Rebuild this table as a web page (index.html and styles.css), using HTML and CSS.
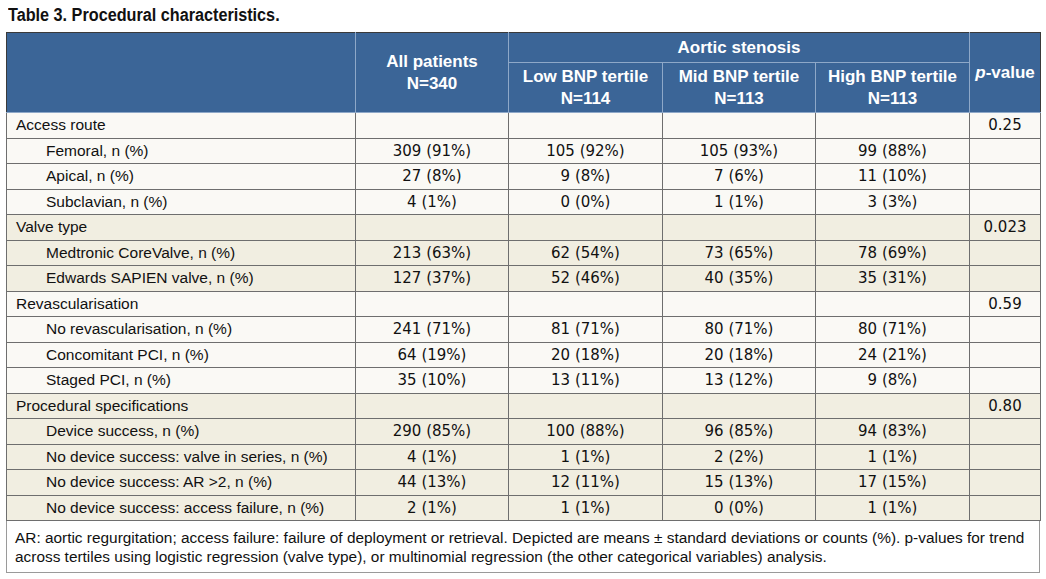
FILE: index.html
```html
<!DOCTYPE html>
<html>
<head>
<meta charset="utf-8">
<link rel="stylesheet" href="styles.css">
</head>
<body>
<div class="page">
  <div class="title-wrap"><h1 class="title">Table 3. Procedural characteristics.</h1></div>
  <table class="tbl">
    <colgroup>
      <col class="c-label"><col class="c-num"><col class="c-num2"><col class="c-num"><col class="c-num2"><col class="c-p">
    </colgroup>
    <thead>
      <tr class="h1">
        <th rowspan="2"></th>
        <th rowspan="2">All patients<br>N=340</th>
        <th colspan="3" class="grp">Aortic stenosis</th>
        <th rowspan="2"><i>p</i>-value</th>
      </tr>
      <tr class="h2">
        <th>Low BNP tertile<br>N=114</th>
        <th>Mid BNP tertile<br>N=113</th>
        <th>High BNP tertile<br>N=113</th>
      </tr>
    </thead>
    <tbody class="light">
      <tr><td class="grp-label">Access route</td><td></td><td></td><td></td><td></td><td>0.25</td></tr>
      <tr><td class="sub">Femoral, n (%)</td><td>309 (91%)</td><td>105 (92%)</td><td>105 (93%)</td><td>99 (88%)</td><td></td></tr>
      <tr><td class="sub">Apical, n (%)</td><td>27 (8%)</td><td>9 (8%)</td><td>7 (6%)</td><td>11 (10%)</td><td></td></tr>
      <tr><td class="sub">Subclavian, n (%)</td><td>4 (1%)</td><td>0 (0%)</td><td>1 (1%)</td><td>3 (3%)</td><td></td></tr>
    </tbody>
    <tbody class="dark">
      <tr><td class="grp-label">Valve type</td><td></td><td></td><td></td><td></td><td>0.023</td></tr>
      <tr><td class="sub">Medtronic CoreValve, n (%)</td><td>213 (63%)</td><td>62 (54%)</td><td>73 (65%)</td><td>78 (69%)</td><td></td></tr>
      <tr><td class="sub">Edwards SAPIEN valve, n (%)</td><td>127 (37%)</td><td>52 (46%)</td><td>40 (35%)</td><td>35 (31%)</td><td></td></tr>
    </tbody>
    <tbody class="light">
      <tr><td class="grp-label">Revascularisation</td><td></td><td></td><td></td><td></td><td>0.59</td></tr>
      <tr><td class="sub">No revascularisation, n (%)</td><td>241 (71%)</td><td>81 (71%)</td><td>80 (71%)</td><td>80 (71%)</td><td></td></tr>
      <tr><td class="sub">Concomitant PCI, n (%)</td><td>64 (19%)</td><td>20 (18%)</td><td>20 (18%)</td><td>24 (21%)</td><td></td></tr>
      <tr><td class="sub">Staged PCI, n (%)</td><td>35 (10%)</td><td>13 (11%)</td><td>13 (12%)</td><td>9 (8%)</td><td></td></tr>
    </tbody>
    <tbody class="dark">
      <tr><td class="grp-label">Procedural specifications</td><td></td><td></td><td></td><td></td><td>0.80</td></tr>
      <tr><td class="sub">Device success, n (%)</td><td>290 (85%)</td><td>100 (88%)</td><td>96 (85%)</td><td>94 (83%)</td><td></td></tr>
      <tr><td class="sub">No device success: valve in series, n (%)</td><td>4 (1%)</td><td>1 (1%)</td><td>2 (2%)</td><td>1 (1%)</td><td></td></tr>
      <tr><td class="sub">No device success: AR &gt;2, n (%)</td><td>44 (13%)</td><td>12 (11%)</td><td>15 (13%)</td><td>17 (15%)</td><td></td></tr>
      <tr><td class="sub">No device success: access failure, n (%)</td><td>2 (1%)</td><td>1 (1%)</td><td>0 (0%)</td><td>1 (1%)</td><td></td></tr>
    </tbody>
  </table>
  <div class="note">AR: aortic regurgitation; access failure: failure of deployment or retrieval. Depicted are means ± standard deviations or counts (%). p-values for trend across tertiles using logistic regression (valve type), or multinomial regression (the other categorical variables) analysis.</div>
</div>
</body>
</html>
```
FILE: styles.css
```css
html, body {
  margin: 0;
  padding: 0;
  background: #ffffff;
}
.page {
  padding: 3px 0 0 6px;
  width: 1034px;
  font-family: "Liberation Sans", Arial, sans-serif;
  color: #111111;
}
.title-wrap {
  height: 29px;
  margin-left: 2px;
}
.title {
  margin: 0;
  display: inline-block;
  transform: scaleX(0.9);
  transform-origin: 0 50%;
  font-family: "Liberation Sans", Arial, sans-serif;
  font-weight: bold;
  font-size: 18px;
  line-height: 24px;
  color: #111;
  white-space: nowrap;
}
.tbl {
  border-collapse: collapse;
  table-layout: fixed;
  width: 1034px;
  border: 1px solid #3a3a3a;
}
.c-label { width: 349px; }
.c-num { width: 153px; }
.c-num2 { width: 154px; }
.c-p { width: 71px; }
.tbl th {
  background: #3b6597;
  color: #ffffff;
  font-weight: bold;
  font-size: 17px;
  line-height: 22px;
  text-align: center;
  vertical-align: middle;
  padding: 0;
  border: 1px solid #8ea8c8;
}
.tbl th i { font-weight: bold; }
.h1 th { height: 29px; }
.h2 th { height: 49px; }
.tbl thead tr:first-child th { border-top: 1px solid #3a3a3a; }
.tbl thead th:first-child { border-left: 1px solid #3a3a3a; }
.tbl thead tr:first-child th:last-child { border-right: 1px solid #3a3a3a; }
.tbl td {
  height: 24.5px;
  padding: 0;
  text-align: center;
  border: 1px solid #6e6e6e;
  font-family: "DejaVu Sans", Verdana, sans-serif;
  font-size: 15px;
  line-height: 18px;
  white-space: nowrap;
}
.tbl td.grp-label,
.tbl td.sub {
  font-family: "Liberation Sans", Arial, sans-serif;
  font-size: 15.5px;
  text-align: left;
}
.tbl td.grp-label { padding-left: 9px; }
.tbl td.sub { padding-left: 39px; }
.light td { background: #faf9f5; }
.dark td { background: #f1eee1; }
.tbl tbody tr:first-child td { border-top: 1px solid #555; }
.note {
  box-sizing: border-box;
  width: 1034px;
  border: 1px solid #9a9a9a;
  border-top: none;
  background: #ffffff;
  padding: 7px 8px 6px 8px;
  font-size: 15.4px;
  line-height: 19px;
  color: #111111;
}
```
